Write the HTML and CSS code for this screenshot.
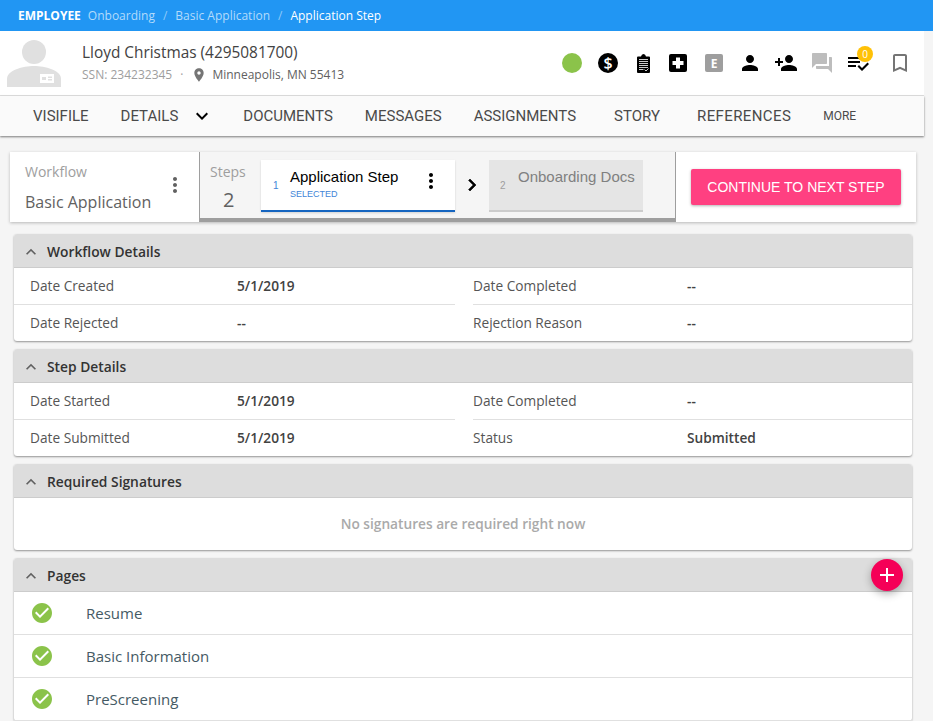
FILE: index.html
```html
<!DOCTYPE html>
<html>

	<head lang="en">
		<meta charset="UTF-8">
		<title>Application Step</title>
		<link rel="stylesheet" href="styles.css">
	</head>

	<body>
		<div class="crumbs">
			<b>EMPLOYEE</b>
			<a>Onboarding</a><i>/</i><a>Basic Application</a><i>/</i><span>Application Step</span>
		</div>

		<div class="page">
			<div class="header">
				<svg class="avatar" width="54" height="48" viewBox="0 0 54 48">
					<circle cx="27" cy="13" r="12" fill="#e0e0e0"/>
					<path d="M0 48V40C0 31 16 27 27 27S54 31 54 40V48Z" fill="#e0e0e0"/>
					<path d="M33 35H47V44H33ZM35 38V41H39V38ZM41 37.500V39H45V37.500ZM41 40V41.500H45V40Z" fill="#fff" fill-rule="evenodd"/>
				</svg>
				<div class="who">
					<div class="name">Lloyd Christmas (4295081700)</div>
					<div class="sub">
						<span>SSN: 234232345</span><span class="dot">·</span>
						<svg width="16" height="16" viewBox="0 0 24 24"><path fill="#757575" d="M12 2C8.130 2 5 5.130 5 9c0 5.250 7 13 7 13s7-7.750 7-13c0-3.870-3.130-7-7-7zm0 9.500c-1.380 0-2.500-1.120-2.500-2.500s1.120-2.500 2.500-2.500 2.500 1.120 2.500 2.500-1.120 2.500-2.500 2.500z"/></svg>
						<em>Minneapolis, MN 55413</em>
					</div>
				</div>
				<div class="icons">
					<span class="status"></span>
					<svg class="money" width="20" height="20" viewBox="0 0 20 20"><circle cx="10" cy="10" r="10"/><text x="10" y="15.500" class="ic-text dollar">$</text></svg>
					<svg class="clip" width="13" height="19" viewBox="0 0 13 19"><path d="M0 3.500Q0 2.500 1 2.500H4Q4.500 0 6.500 0T9 2.500H12Q13 2.500 13 3.500V18Q13 19 12 19H1Q0 19 0 18Z"/><path d="M2 5.500H11M2 7.500H11M2 9.500H11M2 11.500H11M2 13.500H11M2 15.500H6.500M7.500 15.500L9 17 11.500 14.500" stroke="#fff" stroke-width=".8" fill="none"/></svg>
					<svg width="18" height="18" viewBox="0 0 18 18"><rect width="18" height="18" rx="2"/><path d="M7 3.500H11V7H14.500V11H11V14.500H7V11H3.500V7H7Z" fill="#fff"/></svg>
					<svg width="18" height="18" viewBox="0 0 18 18"><rect width="18" height="18" rx="2" fill="#9e9e9e"/><text x="9" y="13.500" class="ic-text letter">E</text></svg>
					<svg width="24" height="24" viewBox="0 0 24 24"><path d="M12 12c2.210 0 4-1.790 4-4s-1.790-4-4-4-4 1.790-4 4 1.790 4 4 4zm0 2c-2.670 0-8 1.340-8 4v2h16v-2c0-2.660-5.330-4-8-4z"/></svg>
					<svg width="24" height="24" viewBox="0 0 24 24"><path d="M15 12c2.210 0 4-1.790 4-4s-1.790-4-4-4-4 1.790-4 4 1.790 4 4 4zm-9-2V7H4v3H1v2h3v3h2v-3h3v-2H6zm9 4c-2.670 0-8 1.340-8 4v2h16v-2c0-2.660-5.330-4-8-4z"/></svg>
					<svg width="24" height="24" viewBox="0 0 24 24"><path fill="#bdbdbd" d="M21 6h-2v9H6v2c0 .550.450 1 1 1h11l4 4V7c0-.550-.450-1-1-1zm-4 6V3c0-.550-.450-1-1-1H3c-.550 0-1 .450-1 1v14l4-4h10c.550 0 1-.450 1-1z"/></svg>
					<span class="todo">
						<svg width="24" height="24" viewBox="0 0 24 24"><path d="M14 10H2v2h12v-2zm0-4H2v2h12V6zM2 16h8v-2H2v2zm19.500-4.500L23 13l-6.990 7-4.510-4.500L13 14l3.010 3 5.490-5.500z"/></svg>
						<span class="badge">0</span>
					</span>
					<svg class="mark" width="24" height="24" viewBox="0 0 24 24"><path fill="#757575" d="M17 3H7c-1.100 0-1.990.9-1.990 2L5 21l7-3 7 3V5c0-1.100-.9-2-2-2zm0 15l-5-2.180L7 18V5h10v13z"/></svg>
				</div>
			</div>

			<div class="nav">
				<a>VISIFILE</a>
				<a class="drop">DETAILS
					<svg width="24" height="24" viewBox="0 0 24 24"><path d="M16.590 8.590L12 13.170 7.410 8.590 6 10l6 6 6-6z"/></svg>
				</a>
				<a>DOCUMENTS</a>
				<a>MESSAGES</a>
				<a>ASSIGNMENTS</a>
				<a class="story">STORY</a>
				<a class="refs">REFERENCES</a>
				<a class="more">MORE</a>
			</div>

			<div class="flow">
				<div class="flow-name">
					<div class="flow-label">Workflow</div>
					<div class="flow-value">Basic Application</div>
					<svg class="flow-menu" width="24" height="24" viewBox="0 0 24 24"><path fill="#616161" d="M12 8c1.100 0 2-.9 2-2s-.9-2-2-2-2 .9-2 2 .9 2 2 2zm0 2c-1.100 0-2 .9-2 2s.9 2 2 2 2-.9 2-2-.9-2-2-2zm0 6c-1.100 0-2 .9-2 2s.9 2 2 2 2-.9 2-2-.9-2-2-2z"/></svg>
				</div>
				<div class="steps">
					<div class="steps-count">
						<div class="flow-label">Steps</div>
						<div class="count">2</div>
					</div>
					<div class="step on">
						<span class="num">1</span>
						<div class="step-text">
							<div class="step-title">Application Step</div>
							<div class="step-sub">SELECTED</div>
						</div>
						<svg width="24" height="24" viewBox="0 0 24 24"><path d="M12 8c1.100 0 2-.9 2-2s-.9-2-2-2-2 .9-2 2 .9 2 2 2zm0 2c-1.100 0-2 .9-2 2s.9 2 2 2 2-.9 2-2-.9-2-2-2zm0 6c-1.100 0-2 .9-2 2s.9 2 2 2 2-.9 2-2-.9-2-2-2z"/></svg>
					</div>
					<svg class="arrow" width="24" height="24" viewBox="0 0 24 24"><path d="M10 6L8.590 7.410 13.170 12l-4.580 4.590L10 18l6-6z" stroke="#000" stroke-width=".6"/></svg>
					<div class="step off">
						<span class="num">2</span>
						<div class="step-text">
							<div class="step-title">Onboarding Docs</div>
						</div>
					</div>
				</div>
				<div class="flow-action">
					<button class="next">CONTINUE TO NEXT STEP</button>
				</div>
			</div>

			<div class="card">
				<div class="card-head">
					<svg width="20" height="20" viewBox="0 0 24 24"><path d="M12 8l-6 6 1.410 1.410L12 10.830l4.590 4.580L18 14z"/></svg>
					Workflow Details
				</div>
				<div class="facts">
					<div class="fact line"><span>Date Created</span><b>5/1/2019</b></div>
					<div class="fact line right"><span>Date Completed</span><b>--</b></div>
					<div class="fact"><span>Date Rejected</span><b>--</b></div>
					<div class="fact right"><span>Rejection Reason</span><b>--</b></div>
				</div>
			</div>

			<div class="card">
				<div class="card-head">
					<svg width="20" height="20" viewBox="0 0 24 24"><path d="M12 8l-6 6 1.410 1.410L12 10.830l4.590 4.580L18 14z"/></svg>
					Step Details
				</div>
				<div class="facts">
					<div class="fact line"><span>Date Started</span><b>5/1/2019</b></div>
					<div class="fact line right"><span>Date Completed</span><b>--</b></div>
					<div class="fact"><span>Date Submitted</span><b>5/1/2019</b></div>
					<div class="fact right"><span>Status</span><b>Submitted</b></div>
				</div>
			</div>

			<div class="card">
				<div class="card-head">
					<svg width="20" height="20" viewBox="0 0 24 24"><path d="M12 8l-6 6 1.410 1.410L12 10.830l4.590 4.580L18 14z"/></svg>
					Required Signatures
				</div>
				<div class="empty">No signatures are required right now</div>
			</div>

			<div class="card pages">
				<div class="card-head">
					<svg width="20" height="20" viewBox="0 0 24 24"><path d="M12 8l-6 6 1.410 1.410L12 10.830l4.590 4.580L18 14z"/></svg>
					Pages
				</div>
				<span class="fab">
					<svg width="20" height="20" viewBox="0 0 20 20"><path d="M9 3H11V9H17V11H11V17H9V11H3V9H9Z" fill="#fff"/></svg>
				</span>
				<div class="page-row">
					<svg width="24" height="24" viewBox="0 0 24 24"><path d="M12 2C6.480 2 2 6.480 2 12s4.480 10 10 10 10-4.480 10-10S17.520 2 12 2zm-2 15l-5-5 1.410-1.410L10 14.170l7.590-7.590L19 8l-9 9z"/></svg>
					Resume
				</div>
				<div class="page-row">
					<svg width="24" height="24" viewBox="0 0 24 24"><path d="M12 2C6.480 2 2 6.480 2 12s4.480 10 10 10 10-4.480 10-10S17.520 2 12 2zm-2 15l-5-5 1.410-1.410L10 14.170l7.590-7.590L19 8l-9 9z"/></svg>
					Basic Information
				</div>
				<div class="page-row">
					<svg width="24" height="24" viewBox="0 0 24 24"><path d="M12 2C6.480 2 2 6.480 2 12s4.480 10 10 10 10-4.480 10-10S17.520 2 12 2zm-2 15l-5-5 1.410-1.410L10 14.170l7.590-7.590L19 8l-9 9z"/></svg>
					PreScreening
				</div>
			</div>
		</div>
	</body>

</html>
```

FILE: styles.css
```css
html,
body {
	margin: 0;
	height: 721px;
	overflow: hidden;
}

body {
	background: #f5f5f5;
	font-family: "Open Sans", sans-serif;
	color: #333;
}

.crumbs {
	height: 31px;
	background: #2196f3;
	padding-left: 18px;
	display: flex;
	align-items: center;
	font-size: 12px;
	color: #fff;
	box-sizing: border-box;
}

.crumbs b {
	margin-right: 7px;
}

.crumbs a {
	color: #b3dbfb;
}

.crumbs i {
	font-style: normal;
	color: #90caf9;
	margin: 0 8px;
}

.page {
	width: 924px;
}

.header {
	height: 64px;
	background: #fff;
	display: flex;
	align-items: center;
	border-bottom: 1px solid #e0e0e0;
	padding-left: 7px;
}

.avatar {
	margin-top: 8px;
	align-self: flex-start;
}

.who {
	margin-left: 21px;
	padding-top: 3px;
}

.name {
	font-size: 15.400px;
	line-height: 20px;
	color: #424242;
}

.sub {
	display: flex;
	align-items: center;
	font-size: 12px;
	line-height: 22px;
	color: #9e9e9e;
	margin-top: 1px;
}

.sub .dot {
	margin: 0 8px 0 8px;
}

.sub svg {
	margin-right: 5px;
}

.sub em {
	font-style: normal;
	color: #616161;
}

.icons {
	margin: 0 12px 0 auto;
	display: grid;
	grid-auto-flow: column;
	grid-auto-columns: 36px;
	justify-items: center;
	align-items: center;
}

.icons .mark {
	margin-left: 12px;
}

.icons .status,
.icons .money {
	margin-left: 4px;
}

.icons .clip {
	margin-left: 2px;
}

.ic-text {
	fill: #fff;
	font-family: "Open Sans", sans-serif;
	text-anchor: middle;
}

.dollar {
	font-size: 16px;
	font-weight: 600;
}

.letter {
	font-size: 12px;
	font-weight: 700;
}

.status {
	width: 20px;
	height: 20px;
	border-radius: 50%;
	background: #8bc34a;
}

.todo {
	position: relative;
	display: flex;
}

.badge {
	position: absolute;
	top: -5px;
	right: -3px;
	width: 16px;
	height: 16px;
	border-radius: 50%;
	background: #ffc107;
	color: #fff;
	font-size: 10px;
	line-height: 16px;
	text-align: center;
}

.nav {
	height: 40px;
	background: #fafafa;
	box-shadow: 0 1px 2px rgba(0, 0, 0, .5);
	display: flex;
	align-items: center;
	padding-left: 33px;
	font-family: Roboto, sans-serif;
	font-size: 15px;
	color: #4a4a4a;
}

.nav a {
	margin-right: 32px;
}

.nav .drop {
	display: flex;
	align-items: center;
	margin-right: 29px;
}

.nav .drop svg {
	margin-left: 12px;
}

.nav .story {
	margin-left: 6px;
	margin-right: 37px;
}

.nav .refs {
	letter-spacing: .4px;
}

.nav .more {
	font-size: 12px;
}

.flow {
	display: flex;
	height: 70px;
	margin: 16px 8px 12px 10px;
	background: #fff;
	box-shadow: 0 1px 3px rgba(0, 0, 0, .25);
}

.flow-name {
	position: relative;
	width: 189px;
	padding: 11px 15px;
	box-sizing: border-box;
}

.flow-label {
	font-size: 14px;
	line-height: 18px;
	color: #9e9e9e;
}

.flow-value {
	font-size: 16px;
	line-height: 22px;
	margin-top: 10px;
	color: #616161;
}

.flow-menu {
	position: absolute;
	top: 21px;
	right: 12px;
}

.steps {
	width: 477px;
	background: #f5f5f5;
	border-left: 1px solid #9e9e9e;
	border-right: 1px solid #9e9e9e;
	border-bottom: 4px solid #9e9e9e;
	box-sizing: border-box;
	display: flex;
	align-items: flex-start;
	padding-top: 8px;
}

.steps-count {
	width: 61px;
	padding: 3px 0 0 10px;
	box-sizing: border-box;
}

.count {
	font-size: 20px;
	line-height: 26px;
	margin: 6px 0 0 13px;
	color: #616161;
}

.step {
	height: 52px;
	box-sizing: border-box;
	display: flex;
	font-family: "Liberation Sans", sans-serif;
}

.step.on {
	width: 194px;
	background: #fff;
	border-bottom: 2px solid #1565c0;
	box-shadow: 0 1px 2px rgba(0, 0, 0, .15);
	padding: 8px 12px 0 12px;
}

.step.off {
	width: 154px;
	background: #e5e5e5;
	border-bottom: 2px solid #ccc;
	padding: 8px 0 0 11px;
}

.num {
	font-size: 10px;
	margin-top: 12px;
	width: 17px;
	color: #4285d8;
}

.step.on .step-text {
	flex: 1;
}

.step.on svg {
	margin-top: 1px;
}

.step-title {
	font-size: 15px;
	line-height: 17px;
	color: #000;
	white-space: nowrap;
}

.step-sub {
	font-size: 9px;
	line-height: 14px;
	margin-top: 2px;
	color: #4285d8;
}

.off .num {
	color: #9e9e9e;
	width: 18px;
}

.off .step-title {
	color: #808080;
}

.arrow {
	margin: 13px 5px 0 5px;
}

.flow-action {
	flex: 1;
	display: flex;
	align-items: center;
	justify-content: center;
}

.next {
	width: 210px;
	height: 36px;
	border: 0;
	border-radius: 2px;
	background: #ff4081;
	color: #fff;
	font: 14px "Liberation Sans", sans-serif;
	box-shadow: 0 1px 3px rgba(0, 0, 0, .3);
	padding: 0;
}

.card {
	margin: 0 12px 8px 14px;
	background: #fff;
	border-radius: 3px;
	box-shadow: 0 1px 2px rgba(0, 0, 0, .4);
}

.card-head {
	height: 34px;
	box-sizing: border-box;
	border-bottom: 1px solid #ccc;
	background: #ddd;
	border-radius: 3px 3px 0 0;
	display: flex;
	align-items: center;
	padding: 2px 0 0 7px;
	font-size: 13.800px;
	font-weight: 600;
	color: #333;
}

.card-head svg {
	margin-right: 6px;
	fill: #616161;
}

.facts {
	display: grid;
	grid-template-columns: 441px 1fr;
	column-gap: 18px;
}

.fact {
	height: 36px;
	box-sizing: border-box;
	display: flex;
	align-items: center;
	padding: 0 0 2px 16px;
	font-size: 13.700px;
	color: #555;
}

.fact.line {
	height: 37px;
	border-bottom: 1px solid #e0e0e0;
}

.fact span {
	width: 207px;
}

.fact b {
	font-weight: 600;
	color: #424242;
}

.fact.right {
	padding-left: 0;
}

.fact.right span {
	width: 214px;
}

.empty {
	height: 52px;
	box-sizing: border-box;
	padding-bottom: 2px;
	display: flex;
	align-items: center;
	justify-content: center;
	font-size: 13.700px;
	font-weight: 600;
	color: #aaa;
}

.pages {
	position: relative;
}

.fab {
	position: absolute;
	top: 1px;
	right: 9px;
	width: 32px;
	height: 32px;
	border-radius: 50%;
	background: #f50057;
	display: flex;
	align-items: center;
	justify-content: center;
	box-shadow: 0 3px 8px rgba(0, 0, 0, .3);
}

.page-row {
	height: 43px;
	box-sizing: border-box;
	border-bottom: 1px solid #e0e0e0;
	display: flex;
	align-items: center;
	font-size: 15px;
	color: #455a64;
	padding-left: 16px;
}

.page-row svg {
	fill: #8bc34a;
	margin-right: 32px;
}
```
